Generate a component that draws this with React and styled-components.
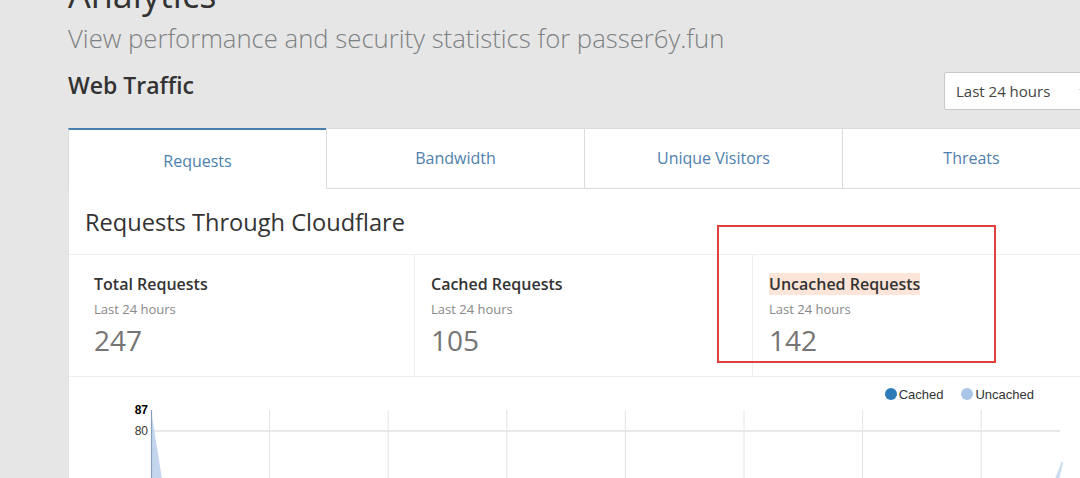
import React from "react";
import styled, { createGlobalStyle } from "styled-components";
import { ChevronDown } from "lucide-react";

const GlobalStyle = createGlobalStyle`
  html, body {
    margin: 0;
    padding: 0;
    overflow: hidden;
    background: #e6e6e6;
  }
  body {
    font-family: "Open Sans", "Noto Sans", sans-serif;
    color: #333;
  }
`;

const tabs = ["Requests", "Bandwidth", "Unique Visitors", "Threats"];

const stats = [
  { label: "Total Requests", value: "247" },
  { label: "Cached Requests", value: "105" },
  { label: "Uncached Requests", value: "142", marked: true },
];

const gridX = [82, 200.6, 319.2, 437.8, 556.4, 675, 793.6, 912.2];

export default function App() {
  return (
    <>
      <GlobalStyle />
      <Page>
        <Title>Analytics</Title>
        <Subtitle>View performance and security statistics for passer6y.fun</Subtitle>
        <HeaderRow>
          <SectionTitle>Web Traffic</SectionTitle>
          <Select>
            Last 24 hours
            <ChevronDown size={12} color="#888" />
          </Select>
        </HeaderRow>

        <Card>
          <Tabs>
            {tabs.map((t, i) => (
              <Tab key={t} $active={i === 0}>
                {t}
              </Tab>
            ))}
          </Tabs>
          <Body>
            <CardTitle>Requests Through Cloudflare</CardTitle>
            <Stats>
              {stats.map((s) => (
                <Stat key={s.label}>
                  <StatLabel $marked={s.marked}>{s.label}</StatLabel>
                  <StatSub>Last 24 hours</StatSub>
                  <StatValue>{s.value}</StatValue>
                </Stat>
              ))}
            </Stats>
            <ChartArea>
              <Legend>
                <LegendItem $color="#2c7bb8">Cached</LegendItem>
                <LegendItem $color="#a9c6e8">Uncached</LegendItem>
              </Legend>
              <svg width="1032" height="78" viewBox="0 0 1032 78">
                {gridX.map((x, i) =>
                  i === 0 ? null : (
                    <line key={x} x1={x} y1={9} x2={x} y2={78} stroke="#e4e4e4" strokeWidth="1" />
                  )
                )}
                <line x1={82} y1={30} x2={991} y2={30} stroke="#e2e2e2" strokeWidth="1.5" />
                <text x={79} y={13} textAnchor="end" fontFamily="Liberation Sans, Arial, sans-serif" fontSize="12" fontWeight="700" fill="#000">
                  87
                </text>
                <text x={79} y={34} textAnchor="end" fontFamily="Liberation Sans, Arial, sans-serif" fontSize="12" fill="#333">
                  80
                </text>
                <polygon points="82,9 93,78 82,78" fill="#c3d6ee" />
                <line x1={82.5} y1={9} x2={82.5} y2={78} stroke="#8aa0bc" strokeWidth="1.2" />
                <polygon points="986,78 993,60 994,62 990,78" fill="#c8daf0" />
              </svg>
            </ChartArea>
            <Callout />
          </Body>
        </Card>
      </Page>
    </>
  );
}

const Page = styled.div`
  width: 1032px;
  padding-left: 68px;
`;

const Title = styled.h1`
  margin: -27px 0 0;
  font-size: 36px;
  line-height: 44px;
  font-weight: 400;
  color: #333;
`;

const Subtitle = styled.p`
  margin: 6px 0 0;
  font-size: 25.7px;
  line-height: 32px;
  font-weight: 300;
  color: #7d8183;
`;

const HeaderRow = styled.div`
  display: flex;
  justify-content: space-between;
  align-items: flex-start;
  margin-top: 17px;
`;

const SectionTitle = styled.h2`
  margin: -2px 0 0;
  font-size: 23px;
  line-height: 30px;
  font-weight: 600;
  color: #333;
`;

const Select = styled.div`
  box-sizing: border-box;
  width: 156px;
  height: 38px;
  display: flex;
  align-items: center;
  justify-content: space-between;
  padding: 0 10px 0 11px;
  background: #fff;
  border: 1px solid #c8c8c8;
  border-radius: 2px;
  font-size: 15px;
  color: #444;
`;

const Card = styled.div`
  margin-top: 18px;
  background: #fff;
`;

const Tabs = styled.div`
  display: grid;
  grid-template-columns: repeat(4, 1fr);
  height: 61px;
  background: #fff;
`;

const Tab = styled.div`
  box-sizing: border-box;
  display: flex;
  align-items: center;
  justify-content: center;
  font-size: 16px;
  color: ${(p) => (p.$active ? "#4a7fae" : "#4f80ad")};
  border-left: 1px solid #dcdcdc;
  border-top: ${(p) => (p.$active ? "2px solid #4a7fb0" : "1px solid #dcdcdc")};
  border-bottom: ${(p) => (p.$active ? "none" : "1px solid #dcdcdc")};
  padding-top: ${(p) => (p.$active ? "2px" : "0")};
  padding-bottom: ${(p) => (p.$active ? "0" : "2px")};
`;

const Body = styled.div`
  position: relative;
  border-left: 1px solid #e2e2e2;
`;

const CardTitle = styled.h3`
  margin: 0;
  height: 66px;
  box-sizing: border-box;
  display: flex;
  align-items: center;
  padding: 0 0 0 16px;
  font-size: 23.6px;
  font-weight: 400;
  color: #333;
  border-bottom: 1px solid #eee;
`;

const Stats = styled.div`
  display: grid;
  grid-template-columns: 345px 338px 1fr;
  border-bottom: 1px solid #eee;
`;

const Stat = styled.div`
  padding: 18px 0 18px 25px;
  & + & {
    border-left: 1px solid #eee;
    padding-left: 16px;
  }
`;

const StatLabel = styled.div`
  display: inline-block;
  font-size: 16px;
  line-height: 22px;
  font-weight: 600;
  color: #333;
  background: ${(p) => (p.$marked ? "#fde6d9" : "transparent")};
`;

const StatSub = styled.div`
  margin-top: 5px;
  font-size: 13px;
  line-height: 18px;
  color: #888;
`;

const StatValue = styled.div`
  margin-top: 4px;
  font-size: 28px;
  line-height: 36px;
  font-weight: 400;
  color: #757575;
`;

const ChartArea = styled.div`
  padding-top: 10px;
  height: 92px;
  svg {
    display: block;
  }
`;

const Legend = styled.div`
  display: flex;
  justify-content: flex-end;
  gap: 18px;
  padding-right: 66px;
  height: 14px;
  align-items: center;
  font-family: "Liberation Sans", Arial, sans-serif;
  font-size: 13px;
  color: #333;
`;

const LegendItem = styled.span`
  display: inline-flex;
  align-items: center;
  gap: 2px;
  &::before {
    content: "";
    width: 12px;
    height: 12px;
    border-radius: 50%;
    background: ${(p) => p.$color};
  }
`;

const Callout = styled.div`
  position: absolute;
  left: 648px;
  top: 36px;
  width: 279px;
  height: 138px;
  box-sizing: border-box;
  border: 2px solid #e2403f;
  pointer-events: none;
`;
